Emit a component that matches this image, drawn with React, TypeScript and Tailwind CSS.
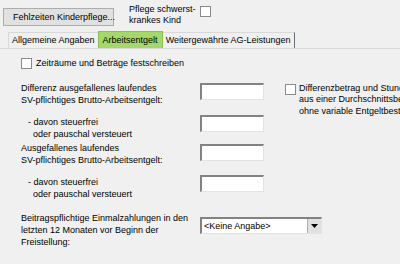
import React from 'react'

const font = { fontFamily: '"Liberation Sans", Arial, sans-serif' }

function Check({ className = '' }: { className?: string }) {
  return <div className={`w-[11px] h-[11px] shrink-0 bg-white border border-[#8a8a8a] ${className}`} />
}

function Field({ className = '' }: { className?: string }) {
  return (
    <div className={`w-[64px] h-[17px] shrink-0 bg-white border-t-2 border-l-2 border-t-[#828282] border-l-[#828282] border-r border-b border-r-[#e3e3e3] border-b-[#e3e3e3] ${className}`} />
  )
}

function Row({ lines, indent = false, className, children }: { lines: string[]; indent?: boolean; className: string; children?: React.ReactNode }) {
  return (
    <div className={`flex items-start ${className}`}>
      <div className={`w-[200px] shrink-0 leading-[12px] ${indent ? 'pl-[28px]' : 'pl-[21px]'}`}>
        {lines.map((l) => (
          <div key={l} className="whitespace-pre">{l}</div>
        ))}
      </div>
      {children}
    </div>
  )
}

export default function App() {
  return (
    <div className="w-[400px] h-[264px] bg-[#f0f0f0] overflow-hidden text-[9px] text-black" style={font}>
      <div className="flex items-start pt-[3px] pl-[3px] h-[29px]">
        <button className="mt-[5px] h-[18px] w-[111px] bg-[#e1e1e1] border border-[#adadad] text-left pl-[9px] leading-[16px] whitespace-nowrap">
          Fehlzeiten Kinderpflege...
        </button>
        <div className="ml-[15px] leading-[11px] pt-[1px]">
          <div>Pflege schwerst-</div>
          <div>krankes Kind</div>
        </div>
        <Check className="ml-[4px] mt-[3px]" />
      </div>

      <div className="flex items-end pl-[8px] h-[19px]">
        <div className="h-[16px] px-[3px] leading-[15px] border-t border-l border-[#d9d9d9]">Allgemeine Angaben</div>
        <div className="h-[17px] px-[4px] leading-[17px] bg-[#a4d868] border border-[#8fbf52] border-b-0">Arbeitsentgelt</div>
        <div className="h-[16px] px-[3px] leading-[15px] border-t border-r border-r-[#6e6e6e] border-t-[#d9d9d9]">Weitergewährte AG-Leistungen</div>
      </div>

      <div className="border-t border-[#d9d9d9] h-full">
        <div className="flex items-center pl-[21px] mt-[8px]">
          <Check />
          <span className="ml-[4px]">Zeiträume und Beträge festschreiben</span>
        </div>

        <Row lines={['Differenz ausgefallenes laufendes', 'SV-pflichtiges Brutto-Arbeitsentgelt:']} className="mt-[11px] h-[24px]">
          <Field className="mt-[1px]" />
          <Check className="ml-[21px] mt-[2px]" />
          <div className="ml-[3px] mt-[1px] shrink-0 leading-[11.5px] whitespace-nowrap">
            <div>Differenzbetrag und Stunden</div>
            <div>aus einer Durchschnittsberechnung</div>
            <div>ohne variable Entgeltbestandteile</div>
          </div>
        </Row>

        <Row lines={['- davon steuerfrei', '  oder pauschal versteuert']} indent className="mt-[10px] h-[24px]">
          <Field className="-mt-[1px]" />
        </Row>

        <Row lines={['Ausgefallenes laufendes', 'SV-pflichtiges Brutto-Arbeitsentgelt:']} className="mt-[2px] h-[24px]">
          <Field className="mt-[2px]" />
        </Row>

        <Row lines={['- davon steuerfrei', '  oder pauschal versteuert']} indent className="mt-[10px] h-[24px]">
          <Field className="-mt-[1px]" />
        </Row>

        <Row lines={['Beitragspflichtige Einmalzahlungen in den', 'letzten 12 Monaten vor Beginn der', 'Freistellung:']} className="mt-[12px]">
          <div className="mt-[5px] shrink-0 flex w-[122px] h-[17px] bg-white border-t-2 border-l-2 border-t-[#828282] border-l-[#828282] border-r border-b border-r-[#e3e3e3] border-b-[#e3e3e3]">
            <div className="flex-1 pl-[2px] leading-[14px]">&lt;Keine Angabe&gt;</div>
            <div className="w-[14px] h-full bg-[#e1e1e1] border-l border-[#adadad] flex items-center justify-center">
              <svg width="7" height="4" viewBox="0 0 7 4"><path d="M0 0h7L3.5 4z" fill="#000" /></svg>
            </div>
          </div>
        </Row>
      </div>
    </div>
  )
}
